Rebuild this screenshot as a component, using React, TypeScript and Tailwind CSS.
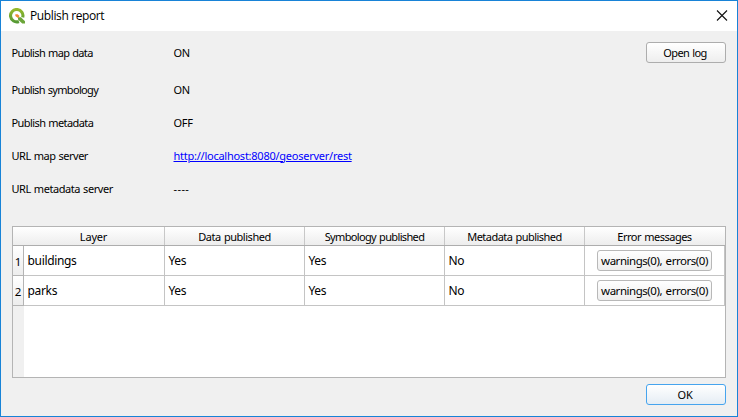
import React from "react";

const settings = [
  { label: "Publish map data", value: "ON", ls: "tracking-[-0.62px] word-spacing", valueLs: "tracking-[-0.4px]" },
  { label: "Publish symbology", value: "ON", ls: "tracking-[-0.66px]", valueLs: "tracking-[-0.4px]" },
  { label: "Publish metadata", value: "OFF", ls: "tracking-[-0.58px]", valueLs: "tracking-[-0.3px]" },
  { label: "URL map server", value: "http://localhost:8080/geoserver/rest", link: true, ls: "tracking-[-0.48px]", valueLs: "tracking-[-0.25px]" },
  { label: "URL metadata server", value: "----", ls: "tracking-[-0.44px]", valueLs: "tracking-[0.4px]" },
];

const headers = [
  { text: "Layer", cell: "w-[152px] pl-[10px]", ls: "tracking-[-0.2px]" },
  { text: "Data published", cell: "w-[140px]", ls: "tracking-[-0.46px]" },
  { text: "Symbology published", cell: "w-[140px]", ls: "tracking-[-0.65px]" },
  { text: "Metadata published", cell: "w-[140px]", ls: "tracking-[-0.53px]" },
  { text: "Error messages", cell: "w-[140px] border-transparent", ls: "tracking-[-0.5px]" },
];

const layers = ["buildings", "parks"];

function Logo() {
  return (
    <svg width="17" height="16" viewBox="0 0 17 16" className="shrink-0">
      <defs>
        <linearGradient id="ring" x1="0" y1="0" x2="0" y2="1">
          <stop offset="0" stopColor="#93b82c" />
          <stop offset="1" stopColor="#569a35" />
        </linearGradient>
      </defs>
      <path d="M9.900 13.500A6.200 6.200 0 1 1 13.700 9.400" fill="none" stroke="url(#ring)" strokeWidth="3.1" />
      <path d="M9 9.200h2.900l4.100 4v2.300h-2.800L9 11.400z" fill="#6ba539" />
      <path d="M6.300 6.200h2.400l1.900 1.700-1.600 2-2.700-1.900z" fill="#ef8a35" />
    </svg>
  );
}

function Button({ children, className }: { children: React.ReactNode; className: string }) {
  return (
    <button className={`flex items-center justify-center whitespace-nowrap rounded-[3px] border bg-linear-to-b ${className}`}>
      {children}
    </button>
  );
}

function SettingRow({ item, height }: { item: (typeof settings)[number]; height: string }) {
  return (
    <div className={`flex items-center [word-spacing:0.6px] ${height}`}>
      <span className={`w-[162px] ${item.ls}`}>{item.label}</span>
      {item.link ? (
        <a className={`text-[#0000ff] underline underline-offset-[1px] ${item.valueLs}`}>{item.value}</a>
      ) : (
        <span className={item.valueLs}>{item.value}</span>
      )}
    </div>
  );
}

export default function App() {
  return (
    <div className="flex h-[417px] w-[738px] flex-col overflow-hidden border border-[#1883d7] bg-[#f0f0f0] font-['Noto_Sans',sans-serif] text-[11px] leading-[16px] text-black">
      <header className="flex h-[30px] shrink-0 items-center bg-white pl-2 pr-[9px]">
        <Logo />
        <h1 className="ml-[4px] grow font-['Open_Sans',sans-serif] text-[12px] tracking-[-0.38px]">Publish report</h1>
        <svg width="12" height="12" viewBox="0 0 12 12" stroke="#111" strokeWidth="1.1">
          <path d="M1 .5l10 10M11 .5L1 10.500" />
        </svg>
      </header>

      <section className="flex h-[195px] shrink-0 justify-between pl-[10.500px] pr-[11px] pt-[11px]">
        <div className="flex flex-col">
          <SettingRow item={settings[0]} height="h-[22px]" />
          <div className="mt-[9px] flex flex-col">
            {settings.slice(1).map((s) => (
              <SettingRow key={s.label} item={s} height="h-[33px]" />
            ))}
          </div>
        </div>
        <Button className="h-[21px] w-[80px] border-[#adadad] from-white to-[#eeeeee] pr-[2px] tracking-[-0.56px] [word-spacing:0.6px]">Open log</Button>
      </section>

      <section className="ml-[11px] flex h-[152px] w-[714px] shrink-0 flex-col border border-[#b4b4b4] bg-white">
        <div className="flex h-[19px] shrink-0 border-b border-[#adadad] bg-linear-to-b from-white to-[#ededed] [word-spacing:0.8px]">
          {headers.map((h) => (
            <div key={h.text} className={`flex items-center justify-center border-r border-[#c8c8c8] pt-[2px] ${h.cell}`}>
              <span className={h.ls}>{h.text}</span>
            </div>
          ))}
        </div>
        {layers.map((name, i) => (
          <div key={name} className="flex h-[30px] shrink-0 text-[12px]">
            <div className="flex w-[11px] items-center justify-center border-b border-r border-[#b4b4b4] bg-linear-to-b from-white to-[#ededed] pt-[3px] text-[11.500px]">{i + 1}</div>
            {[name, "Yes", "Yes", "No"].map((v, c) => (
              <div key={c} className={`flex items-center border-b border-r border-[#c4c4c4] pl-[3.500px] tracking-[-0.33px] ${c === 0 ? "w-[141px]" : "w-[140px]"}`}>
                {v}
              </div>
            ))}
            <div className="flex w-[140px] items-center justify-center border-b border-r border-[#c4c4c4]">
              <Button className="h-[21px] w-[115px] border-[#b8b8b8] from-white to-[#eeeeee] text-[11.500px] tracking-[-0.46px] [word-spacing:1px]">warnings(0), errors(0)</Button>
            </div>
          </div>
        ))}
        <div className="w-[11px] grow bg-[#f0f0f0]" />
      </section>

      <footer className="flex justify-end pr-[11px] pt-[6px]">
        <Button className="h-[21px] w-[80px] border-[#46a4ee] from-white to-[#e5edf4] pr-[2px] tracking-[-0.2px]">OK</Button>
      </footer>
    </div>
  );
}
